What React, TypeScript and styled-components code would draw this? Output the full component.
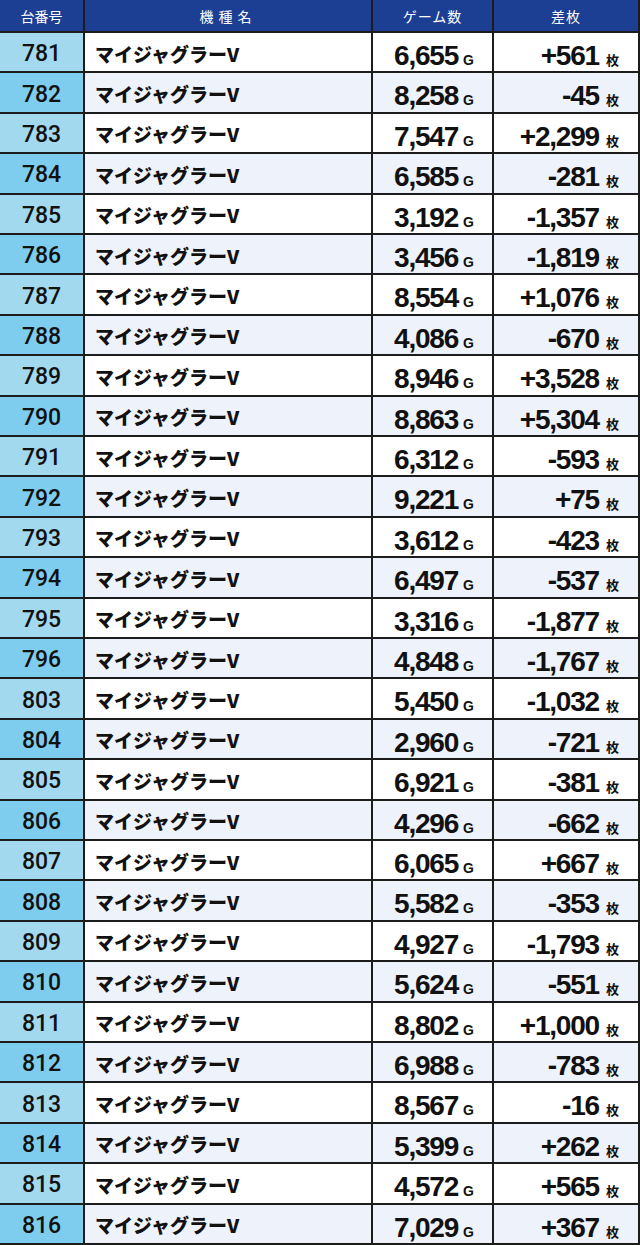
import React from "react";
import styled, { createGlobalStyle } from "styled-components";

const Global = createGlobalStyle`
  html, body { margin: 0; padding: 0; background: #ffffff; }
  body { font-family: "Liberation Sans", Arial, sans-serif; }
`;

const data: [string, string, string][] = [
  ["781", "6,655", "+561"],
  ["782", "8,258", "-45"],
  ["783", "7,547", "+2,299"],
  ["784", "6,585", "-281"],
  ["785", "3,192", "-1,357"],
  ["786", "3,456", "-1,819"],
  ["787", "8,554", "+1,076"],
  ["788", "4,086", "-670"],
  ["789", "8,946", "+3,528"],
  ["790", "8,863", "+5,304"],
  ["791", "6,312", "-593"],
  ["792", "9,221", "+75"],
  ["793", "3,612", "-423"],
  ["794", "6,497", "-537"],
  ["795", "3,316", "-1,877"],
  ["796", "4,848", "-1,767"],
  ["803", "5,450", "-1,032"],
  ["804", "2,960", "-721"],
  ["805", "6,921", "-381"],
  ["806", "4,296", "-662"],
  ["807", "6,065", "+667"],
  ["808", "5,582", "-353"],
  ["809", "4,927", "-1,793"],
  ["810", "5,624", "-551"],
  ["811", "8,802", "+1,000"],
  ["812", "6,988", "-783"],
  ["813", "8,567", "-16"],
  ["814", "5,399", "+262"],
  ["815", "4,572", "+565"],
  ["816", "7,029", "+367"],
];

const Table = styled.div`
  width: 640px;
  height: 1245px;
  box-sizing: border-box;
  display: grid;
  grid-template-columns: 83px 286px 119px 144px;
  grid-template-rows: 31px repeat(30, 1fr);
  column-gap: 2px;
  row-gap: 2px;
  padding: 0 2px 2px 0;
  background: #1c1c1c;
`;

const Head = styled.div<{ $ls?: number }>`
  background: #1d3f93;
  color: #ffffff;
  display: flex;
  align-items: center;
  justify-content: center;
  font-family: "Noto Sans CJK JP", sans-serif;
  font-size: 14px;
  font-weight: 400;
  letter-spacing: ${(p) => p.$ls ?? 0}px;
`;

const NoCell = styled.div<{ $even: boolean }>`
  background: ${(p) => (p.$even ? "#7fcdee" : "#a3d9ee")};
  display: flex;
  align-items: center;
  justify-content: center;
  font-family: Roboto, "Liberation Sans", sans-serif;
  font-weight: 500;
  font-size: 23px;
  color: #111;
  padding-top: 3px;
  box-sizing: border-box;
`;

const NameCell = styled.div<{ $even: boolean }>`
  background: ${(p) => (p.$even ? "#eef2fa" : "#ffffff")};
  display: flex;
  align-items: center;
  padding-left: 10px;
  padding-top: 2px;
  box-sizing: border-box;
  font-family: "Noto Sans CJK JP", sans-serif;
  font-weight: 900;
  font-size: 19px;
  color: #111;
`;

const NumCell = styled.div<{ $even: boolean; $pr: number }>`
  background: ${(p) => (p.$even ? "#eef2fa" : "#ffffff")};
  display: flex;
  align-items: baseline;
  justify-content: flex-end;
  padding-right: ${(p) => p.$pr}px;
  padding-top: 9px;
  box-sizing: border-box;
  color: #111;
`;

const Big = styled.span`
  font-family: "Liberation Sans", Arial, sans-serif;
  font-weight: 700;
  font-size: 28px;
  letter-spacing: -1.2px;
  line-height: 1;
`;

const Unit = styled.span<{ $cjk?: boolean }>`
  font-family: ${(p) => (p.$cjk ? `"Noto Sans CJK JP", sans-serif` : `"Liberation Sans", Arial, sans-serif`)};
  font-weight: 700;
  font-size: ${(p) => (p.$cjk ? 13 : 14)}px;
  margin-left: ${(p) => (p.$cjk ? 7 : 5)}px;
  line-height: 1;
`;

export default function App() {
  return (
    <>
      <Global />
      <Table>
        <Head>台番号</Head>
        <Head $ls={5}>機種名</Head>
        <Head $ls={1}>ゲーム数</Head>
        <Head $ls={1}>差枚</Head>
        {data.map(([no, games, diff], i) => {
          const even = i % 2 === 1;
          return (
            <React.Fragment key={no}>
              <NoCell $even={even}>{no}</NoCell>
              <NameCell $even={even}>マイジャグラーV</NameCell>
              <NumCell $even={even} $pr={18}>
                <Big>{games}</Big>
                <Unit>G</Unit>
              </NumCell>
              <NumCell $even={even} $pr={19}>
                <Big>{diff}</Big>
                <Unit $cjk>枚</Unit>
              </NumCell>
            </React.Fragment>
          );
        })}
      </Table>
    </>
  );
}
